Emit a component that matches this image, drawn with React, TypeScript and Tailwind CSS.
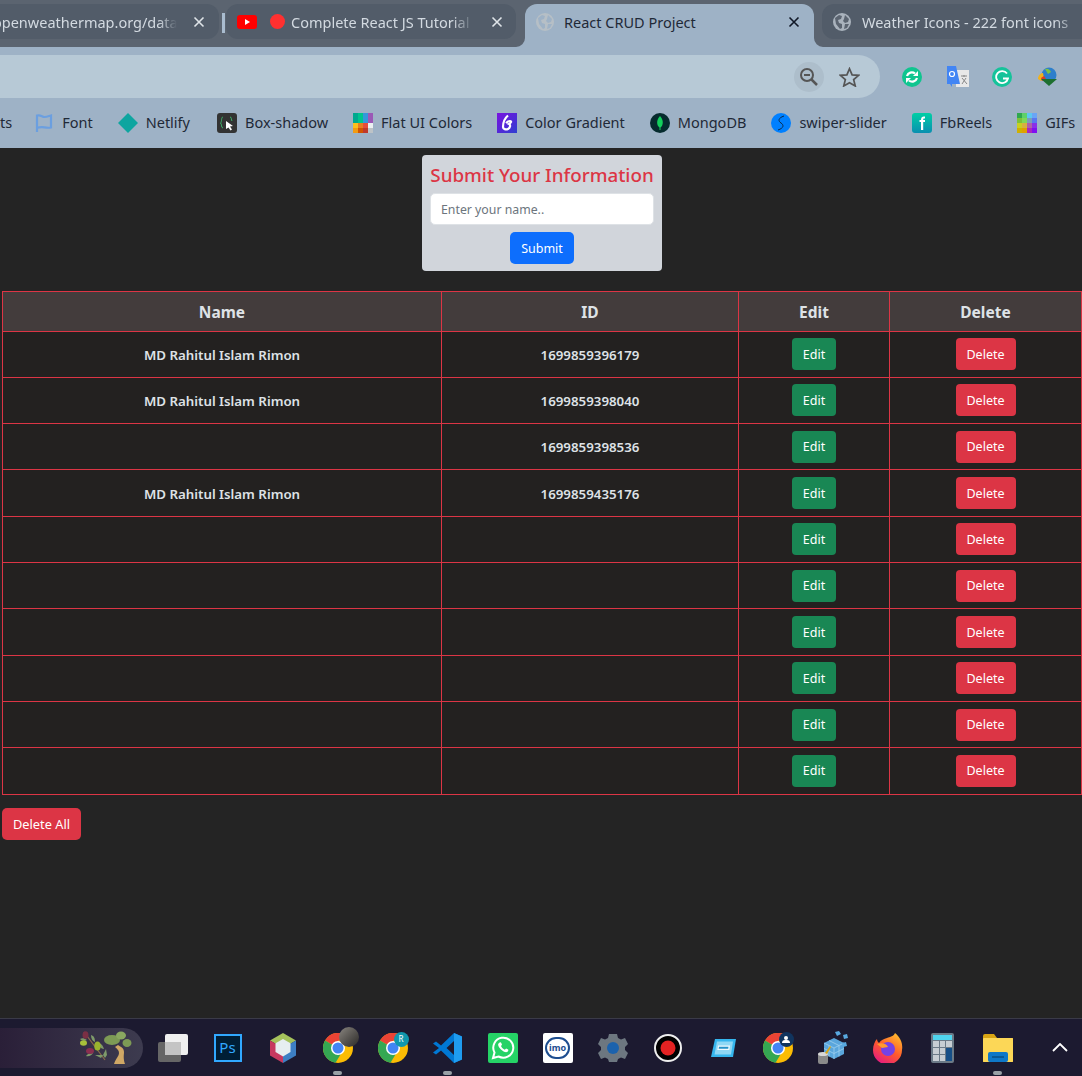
import React from "react";

const FONT = "font-['Noto_Sans','Open_Sans',sans-serif]";

const GlobeIcon = ({ color = "#a9b2bc", inner = "#5b6470" }: { color?: string; inner?: string }) => (
    <svg width="18" height="18" viewBox="0 0 18 18" className="shrink-0">
        <circle cx="9" cy="9" r="9" fill={color} />
        <path d="M2 5l4-3 3 1-1 3-3 1 1 3 3 1v4l-2 1-4-5zM12 2l4 4-1 3-3 1-2-2 1-2zM12 11h4l-2 4-3 1z" fill={inner} />
    </svg>
);

const CloseX = ({ color }: { color: string }) => (
    <svg width="12" height="12" viewBox="0 0 12 12" className="shrink-0">
        <path d="M1.5 1.5l9 9M10.5 1.5l-9 9" stroke={color} strokeWidth="1.6" />
    </svg>
);

const ChromeLogo = ({ badge }: { badge?: React.ReactNode }) => (
    <div className="relative w-[30px] h-[30px]">
        <svg width="30" height="30" viewBox="0 0 30 30">
            <circle cx="15" cy="15" r="15" fill="#fbbc04" />
            <path d="M15 15L2 7.5A15 15 0 0 1 28 7.5H15z" fill="#ea4335" />
            <path d="M15 15L2 7.5A15 15 0 0 0 12.5 29.8L19 19z" fill="#34a853" />
            <circle cx="15" cy="15" r="7" fill="#fff" />
            <circle cx="15" cy="15" r="5.5" fill="#4285f4" />
        </svg>
        {badge}
    </div>
);

// bookmark bar favicons
const Bookmark = ({ icon, label, className = "" }: { icon: React.ReactNode; label: string; className?: string }) => (
    <div className={`flex items-center gap-2 shrink-0 ${className}`}>
        <div className="w-5 h-5 flex items-center justify-center">{icon}</div>
        <span className="text-[14.5px] text-[#1f2937] whitespace-nowrap">{label}</span>
    </div>
);

const FlatColors = ({ colors }: { colors: string[] }) => (
    <svg width="20" height="20" viewBox="0 0 20 20">
        {colors.map((c, i) => (
            <rect key={i} x={(i % 4) * 5} y={Math.floor(i / 4) * 5} width="5" height="5" fill={c} />
        ))}
    </svg>
);

const bookmarks: { label: string; icon: React.ReactNode; className?: string }[] = [
    {
        label: "Font",
        icon: (
            <svg width="20" height="20" viewBox="0 0 20 20" fill="none" stroke="#6b9fe0" strokeWidth="2.2">
                <path d="M3 19V2.500c4-1 5 1.500 7.500 1.500S15 3 17 2.500v12c-2.500.6-4.500.2-6.500-.2s-4.500-.4-7.500.4" />
            </svg>
        ),
    },
    {
        label: "Netlify",
        icon: (
            <svg width="20" height="20" viewBox="0 0 20 20">
                <path d="M10 0l10 10-10 10L0 10z" fill="#0ea5a0" />
            </svg>
        ),
    },
    {
        label: "Box-shadow",
        className: "ml-[2px]",
        icon: (
            <svg width="20" height="20" viewBox="0 0 20 20">
                <rect width="20" height="20" rx="3" fill="#333" />
                <path d="M6 4C4 4 5 9 3.500 10 5 11 4 15 6 15M13 4c2 0 1 3 2 4" stroke="#3fb56b" strokeWidth="1" fill="none" />
                <path d="M9 8l7 5-3 .5 2 3-1.500 1-2-3L9 16z" fill="#fff" />
            </svg>
        ),
    },
    {
        label: "Flat UI Colors",
        icon: <FlatColors colors={["#00a88f", "#00c58e", "#3498db", "#9b59b6", "#00a88f", "#00c58e", "#3498db", "#9b59b6", "#fdbf1d", "#e67e22", "#e74c3c", "#ecf0f1", "#f39c12", "#d35400", "#c0392b", "#bdc3c7"]} />,
    },
    {
        label: "Color Gradient",
        icon: (
            <svg width="20" height="20" viewBox="0 0 20 20">
                <defs>
                    <linearGradient id="grad1" x1="0" y1="0" x2="1" y2="1">
                        <stop offset="0" stopColor="#7a11e0" />
                        <stop offset="1" stopColor="#2f3fd0" />
                    </linearGradient>
                </defs>
                <rect width="20" height="20" fill="url(#grad1)" />
                <path d="M11 2.500C8 5 6 10 6 14c0 2 3 3 5 2s3-4 1-5c2-1 3-3 1-3s-3 1-4 2" stroke="#fff" strokeWidth="2.200" fill="none" />
            </svg>
        ),
    },
    {
        label: "MongoDB",
        icon: (
            <svg width="20" height="20" viewBox="0 0 20 20">
                <circle cx="10" cy="10" r="10" fill="#062b2e" />
                <path d="M10 3c3 3 3.500 7 2 10l-1.500 1.500V17h-1v-2.500L8 13C6.500 10 7 6 10 3z" fill="#13d05c" />
            </svg>
        ),
    },
    {
        label: "swiper-slider",
        icon: (
            <svg width="20" height="20" viewBox="0 0 20 20">
                <circle cx="10" cy="10" r="10" fill="#0080ff" />
                <path d="M13 3C7 5 7 8 10 10s3 5-3 7" stroke="#0b2a4a" strokeWidth="1" fill="none" />
            </svg>
        ),
    },
    {
        label: "FbReels",
        icon: (
            <svg width="20" height="20" viewBox="0 0 20 20">
                <defs>
                    <linearGradient id="grad2" x1="0" y1="0" x2="0" y2="1">
                        <stop offset="0" stopColor="#00cfa5" />
                        <stop offset="1" stopColor="#0a8fb0" />
                    </linearGradient>
                </defs>
                <rect width="20" height="20" rx="3" fill="url(#grad2)" />
                <path d="M9 17V9H7.500V7H9c0-3 1.500-4 4-3.500v2c-1.500-.2-1.800.2-1.800 1.500H13v2h-1.800v8z" fill="#fff" />
            </svg>
        ),
    },
    {
        label: "GIFs",
        icon: <FlatColors colors={["#2fa84f", "#5fd06a", "#5cc8f0", "#6aa5f5", "#7cc23a", "#7ed957", "#7c9eb8", "#5a78f0", "#c8d020", "#d8b040", "#b060a8", "#8a30e8", "#d0b000", "#e0a000", "#a828c0", "#8010f0"]} />,
    },
];

// taskbar icons, 55px apart
const taskbarIcons: { icon: React.ReactNode; open?: boolean }[] = [
    {
        icon: (
            <svg width="30" height="28" viewBox="0 0 30 28">
                <rect x="0" y="8" width="23" height="20" rx="2" fill="#666" />
                <rect x="7" y="0" width="23" height="21" rx="2" fill="#f0f0f0" />
                <rect x="7" y="8" width="16" height="13" fill="#c4c4c4" />
            </svg>
        ),
    },
    {
        icon: (
            <div className="w-[28px] h-[28px] bg-[#001e36] border-2 border-[#31a8ff] flex items-center justify-center text-[15px] leading-none text-[#31a8ff]">Ps</div>
        ),
    },
    {
        icon: (
            <svg width="28" height="30" viewBox="0 0 28 30">
                <path d="M14 0l13 7.500-13 7.500L1 7.500z" fill="#a5c25c" />
                <path d="M1 7.500L14 15v15L1 22.500z" fill="#c7395f" />
                <path d="M27 7.500L14 15v15l13-7.500z" fill="#3d7fc4" />
                <path d="M14 6l7.500 4.300v8.600L14 23.500l-7.500-4.600v-8.600z" fill="#e6eef0" />
            </svg>
        ),
    },
    {
        open: true,
        icon: (
            <ChromeLogo
                badge={
                    <div className="absolute -top-[6px] -right-[6px] w-5 h-5 rounded-full bg-gradient-to-br from-[#8a8680] to-[#2c2a28]" />
                }
            />
        ),
    },
    {
        icon: (
            <ChromeLogo
                badge={
                    <div className="absolute -top-[1px] -right-[1px] w-[15px] h-[15px] rounded-full bg-[#0f97ad] text-[8px] text-white flex items-center justify-center">R</div>
                }
            />
        ),
    },
    {
        open: true,
        icon: (
            <svg width="30" height="30" viewBox="0 0 30 30">
                <path d="M21 0l8 3.500v23L21 30 8 17.500l-5 4L0 19.500 6 15 0 10.500l3-2 5 4zM21 8l-7.500 7 7.500 7z" fill="#0078d4" />
                <path d="M21 0l8 3.500v23L21 30z" fill="#1f9cf0" />
            </svg>
        ),
    },
    {
        icon: (
            <div className="w-[30px] h-[30px] bg-[#25d366] rounded-[2px] flex items-center justify-center">
                <svg width="24" height="24" viewBox="0 0 24 24">
                    <path d="M2 22l1.500-5.500A10 10 0 1 1 7.500 20.500z" fill="none" stroke="#fff" strokeWidth="2" />
                    <path d="M8 7c1-1 2-1 2.300 0l.7 1.700-1 1.300c.8 1.700 2 2.800 3.800 3.700l1.300-1.200 2 1c.7.500 0 2-1 2.500-3 1-9-4-9-7.500 0-.5.400-1 .900-1.500z" fill="#fff" />
                </svg>
            </div>
        ),
    },
    {
        icon: (
            <div className="w-[30px] h-[30px] bg-white rounded-[2px] flex items-center justify-center">
                <div className="w-[25px] h-[22px] rounded-full border-2 border-[#1d4d8f] flex items-center justify-center text-[9px] font-bold text-[#1d4d8f]">imo</div>
            </div>
        ),
    },
    {
        icon: (
            <svg width="30" height="30" viewBox="0 0 30 30">
                <path d="M11 1h8l1 4 3 1.500 4-1.500 3 6-3 3v3l3 3-3 6-4-1.500L20 26l-1 3h-8l-1-3-3-1.500L3 26l-3-6 3-3v-3l-3-3 3-6 4 1.500L10 5z" fill="#6d7780" />
                <circle cx="15" cy="15" r="6" fill="#1b62ad" />
            </svg>
        ),
    },
    {
        icon: (
            <svg width="28" height="28" viewBox="0 0 28 28">
                <circle cx="14" cy="14" r="13" fill="#000" stroke="#eee" strokeWidth="2" />
                <circle cx="14" cy="14" r="7.500" fill="#e32222" />
            </svg>
        ),
    },
    {
        icon: (
            <svg width="26" height="20" viewBox="0 0 26 20">
                <path d="M5 1h21l-3 18H1z" fill="#35b6ee" />
                <path d="M7 3.500h16l-2 13H4.500z" fill="#8fd8f5" />
                <path d="M8 7.500h12l-.7 4.500H7.300z" fill="#f0fafe" />
                <path d="M9 8.800h9.500l-.3 2H8.700z" fill="#2592c9" />
            </svg>
        ),
    },
    {
        icon: (
            <ChromeLogo
                badge={
                    <div className="absolute -top-[1px] -right-[1px] w-[15px] h-[15px] rounded-full bg-[#10345e] flex flex-col items-center justify-center">
                        <div className="w-[4px] h-[4px] rounded-full bg-white" />
                        <div className="w-[8px] h-[3px] rounded-t-full bg-white" />
                    </div>
                }
            />
        ),
    },
    {
        icon: (
            <svg width="30" height="34" viewBox="0 0 30 34">
                <path d="M6 12l10-5 10 5v11l-10 5-10-5z" fill="#5aa6dc" />
                <path d="M6 12l10 5 10-5M16 17v11M11 9.500l10 5M11 14.500v11M21 14.500v11M6 17.500l10 5 10-5" stroke="#9fd0ef" strokeWidth="0.800" fill="none" />
                <path d="M17 1l4-1 2 3-4 2zM25 4l4-1 1 4-4 1zM24 12l4-1 1 4-4 1z" fill="#58a9e0" />
                <rect x="0" y="22" width="10" height="11" rx="2" fill="#8a8a8a" />
                <ellipse cx="5" cy="23" rx="5" ry="2" fill="#d8d8d8" />
                <path d="M7 22l5-7 1 1-4 7z" fill="#d9a514" />
            </svg>
        ),
    },
    {
        icon: (
            <svg width="30" height="30" viewBox="0 0 30 30">
                <defs>
                    <linearGradient id="fox" x1="0.8" y1="0" x2="0.2" y2="1">
                        <stop offset="0" stopColor="#ffbd2e" />
                        <stop offset="0.5" stopColor="#ff5a2c" />
                        <stop offset="1" stopColor="#e31587" />
                    </linearGradient>
                </defs>
                <path d="M22 0c6 5 8 11 7 17a14.500 14.500 0 0 1-29 0C0 12 2 8 4 6c0 2 1 3 2 4 2-3 5-4 8-5 3-1 7-2 8-5z" fill="url(#fox)" />
                <circle cx="15" cy="16" r="7" fill="#7542e5" />
                <path d="M4 11c5-2 10 0 11 3l-6 1z" fill="#ff9a2e" />
            </svg>
        ),
    },
    {
        icon: (
            <div className="w-[23px] h-[30px] rounded-[2px] bg-[#6b7a87] p-[2px] flex flex-col gap-[1px]">
                <div className="h-[5px] bg-[#4fd4ee]" />
                <div className="grid grid-cols-3 gap-[1px] flex-1">
                    <div className="bg-[#c7ced3]" />
                    <div className="bg-[#c7ced3]" />
                    <div className="bg-[#c7ced3]" />
                    <div className="bg-[#c7ced3]" />
                    <div className="bg-[#c7ced3]" />
                    <div className="bg-[#164f87] row-span-2" />
                    <div className="bg-[#c7ced3]" />
                    <div className="bg-[#c7ced3]" />
                </div>
            </div>
        ),
    },
    {
        open: true,
        icon: (
            <svg width="30" height="28" viewBox="0 0 30 28">
                <path d="M0 2a2 2 0 0 1 2-2h9l3 4h16v24H0z" fill="#d9a514" />
                <rect y="4" width="30" height="24" rx="1" fill="#fcd757" />
                <rect x="5" y="18" width="20" height="10" rx="2" fill="#0f78c8" />
                <path d="M9 23h12" stroke="#0b4f85" strokeWidth="1.500" />
            </svg>
        ),
    },
];

const people = [
    { name: "MD Rahitul Islam Rimon", id: "1699859396179" },
    { name: "MD Rahitul Islam Rimon", id: "1699859398040" },
    { name: "", id: "1699859398536" },
    { name: "MD Rahitul Islam Rimon", id: "1699859435176" },
    { name: "", id: "" },
    { name: "", id: "" },
    { name: "", id: "" },
    { name: "", id: "" },
    { name: "", id: "" },
    { name: "", id: "" },
];

export default function App() {
    return (
        <div className={`w-[1082px] h-[1076px] overflow-hidden flex flex-col bg-[#242424] ${FONT}`}>
            {/* tab strip */}
            <div className="h-[47px] shrink-0 bg-[#5b6470] pt-1 flex items-start">
                <div className="w-[219px] h-[35px] shrink-0 rounded-r-[12px] bg-[#525c69] flex items-center pr-[14px] overflow-hidden">
                    <div className="flex-1 min-w-0 overflow-hidden whitespace-nowrap pt-[2px] text-[14.5px] text-[#d3dae1] -ml-[7px] [mask-image:linear-gradient(to_right,black_90%,transparent)]">openweathermap.org/data/2.5</div>
                    <div className="ml-[16px]"><CloseX color="#dfe4e8" /></div>
                </div>
                <div className="w-[3px] h-[20px] mt-[9px] ml-[3px] bg-[#a9bccf] shrink-0" />
                <div className="w-[290px] h-[35px] ml-[1px] shrink-0 rounded-[12px] bg-[#525c69] flex items-center pl-[11px] pr-[13px]">
                    <svg width="20" height="14" viewBox="0 0 20 14" className="shrink-0">
                        <rect width="20" height="14" rx="3" fill="#f00" />
                        <path d="M8 4l5 3-5 3z" fill="#fff" />
                    </svg>
                    <div className="w-[15px] h-[15px] rounded-full bg-[#ff3030] ml-[13px] shrink-0" />
                    <div className="flex-1 min-w-0 overflow-hidden whitespace-nowrap pt-[2px] text-[14.5px] text-[#d3dae1] ml-[6px] [mask-image:linear-gradient(to_right,black_88%,transparent)]">Complete React JS Tutorial</div>
                    <div className="ml-[17px]"><CloseX color="#dfe4e8" /></div>
                </div>
                <div className="relative w-[289px] h-[43px] ml-[9px] shrink-0 rounded-t-[12px] bg-[#9eb2c6] flex items-center pb-2 pl-[11px] pr-[14px]">
                    <svg width="9" height="9" viewBox="0 0 9 9" className="absolute -left-[9px] bottom-0">
                        <path d="M9 0v9H0a9 9 0 0 0 9-9z" fill="#9eb2c6" />
                    </svg>
                    <GlobeIcon color="#b6bfc6" inner="#9eb2c6" />
                    <div className="flex-1 whitespace-nowrap pt-[2px] text-[14.5px] text-[#1f2937] ml-[10px]">React CRUD Project</div>
                    <CloseX color="#111827" />
                    <svg width="9" height="9" viewBox="0 0 9 9" className="absolute -right-[9px] bottom-0">
                        <path d="M0 0v9h9a9 9 0 0 1-9-9z" fill="#9eb2c6" />
                    </svg>
                </div>
                <div className="w-[260px] h-[35px] ml-2 shrink-0 rounded-l-[12px] bg-[#525c69] flex items-center pl-[11px]">
                    <GlobeIcon />
                    <div className="flex-1 min-w-0 overflow-hidden whitespace-nowrap pt-[2px] text-[14.5px] text-[#d3dae1] ml-[11px] [mask-image:linear-gradient(to_right,black_88%,transparent)]">Weather Icons - 222 font icons</div>
                </div>
            </div>

            {/* address bar */}
            <div className="h-[51px] shrink-0 bg-[#9eb2c6] pt-2 flex items-start">
                <div className="w-[880px] h-[43px] shrink-0 bg-[#b7c9d6] rounded-r-full flex items-center justify-end pr-[20px] gap-[15px]">
                    <div className="w-[30px] h-[30px] rounded-full bg-[#adbecb] flex items-center justify-center">
                        <svg width="20" height="20" viewBox="0 0 20 20" fill="none" stroke="#555" strokeWidth="2">
                            <circle cx="8" cy="8" r="6" />
                            <path d="M5 8h6" />
                            <path d="M12.500 12.500L18 18" strokeWidth="2.500" />
                        </svg>
                    </div>
                    <svg width="21" height="20" viewBox="0 0 24 23" fill="none" stroke="#555" strokeWidth="2">
                        <path d="M12 2l3 7 7.500.6-5.700 4.900 1.800 7.300L12 18l-6.600 3.800 1.800-7.300L1.500 9.600 9 9z" />
                    </svg>
                </div>
                <div className="flex-1 flex items-center h-[43px] pl-[22px] gap-[25px]">
                    <div className="w-5 h-5 rounded-full bg-[#0fc58f] flex items-center justify-center">
                        <svg width="14" height="14" viewBox="0 0 14 14" fill="none" stroke="#fff" strokeWidth="2.200">
                            <path d="M2 6a5 5 0 0 1 8-2.500M12 8a5 5 0 0 1-8 2.500" />
                            <path d="M8 6h5V1z" fill="#fff" stroke="none" />
                            <path d="M6 8H1v5z" fill="#fff" stroke="none" />
                        </svg>
                    </div>
                    <svg width="22" height="22" viewBox="0 0 22 22" className="-mr-[2px]">
                        <rect x="9" y="4" width="13" height="17" fill="#e8e8e8" />
                        <path d="M0 0h9l4 18H5v3l-2-3H0z" fill="#4285f4" />
                        <path d="M14 10h6M17 9v2M15 18l4-6M15 12l5 6" stroke="#888" strokeWidth="1" />
                        <circle cx="5" cy="8" r="2.500" fill="none" stroke="#fff" strokeWidth="1.200" />
                    </svg>
                    <div className="w-5 h-5 rounded-full bg-[#15c39a] flex items-center justify-center">
                        <svg width="14" height="14" viewBox="0 0 14 14" fill="none" stroke="#fff" strokeWidth="1.800">
                            <path d="M12 3.500A6 6 0 1 0 13 8.500H8" />
                        </svg>
                    </div>
                    <svg width="21" height="20" viewBox="0 0 21 20">
                        <circle cx="12" cy="8" r="7.500" fill="#2d7fcb" />
                        <path d="M8 2c3-1 5 1 6 3l-3 2z" fill="#7dc242" />
                        <path d="M1 12c0-4 3-6 5-6l1 5-3 3z" fill="#f2b21b" />
                        <path d="M4 11l3-2 2 3-4 2z" fill="#d93a2b" />
                        <path d="M4 12h16l-8 7z" fill="#1d6f2f" />
                    </svg>
                </div>
            </div>

            {/* bookmarks */}
            <div className="h-[50px] shrink-0 bg-[#9eb2c6] flex items-center gap-[25px] overflow-hidden">
                <span className="text-[14.5px] text-[#1f2937] -mr-[3px] shrink-0">ts</span>
                {bookmarks.map((b) => (
                    <Bookmark key={b.label} icon={b.icon} label={b.label} className={b.className} />
                ))}
            </div>

            {/* page */}
            <main className="flex-1 min-h-0 pt-[7px]">
                <div className="w-[240px] h-[116px] ml-[422px] bg-[#d1d5db] rounded-[4px] px-2 pt-[5px] flex flex-col items-center">
                    <h4 className="text-[18.8px] font-medium leading-[30px] text-[#dc3545] whitespace-nowrap">Submit Your Information</h4>
                    <input
                        type="text"
                        placeholder="Enter your name.."
                        className="mt-[3px] w-full h-8 rounded-[5px] bg-white border border-[#dee2e6] px-[10px] text-[12.3px] placeholder:text-[#6c757d] outline-none"
                    />
                    <button type="button" className="mt-[7px] w-16 h-8 pt-[2px] rounded-[5px] bg-[#0d6efd] text-white text-[12.5px]">Submit</button>
                </div>

                <table className="ml-[2px] mt-[19.55px] w-[1080px] table-fixed border-collapse border border-[#dc3545] text-[#dee2e6] text-center">
                    <thead>
                        <tr className="h-10 bg-[#433c3c] text-[15.5px]">
                            <th className="w-[439px] pt-[4px] border border-[#dc3545] font-bold">Name</th>
                            <th className="w-[297px] pt-[4px] border border-[#dc3545] font-bold">ID</th>
                            <th className="w-[151px] pt-[4px] border border-[#dc3545] font-bold">Edit</th>
                            <th className="pt-[4px] border border-[#dc3545] font-bold">Delete</th>
                        </tr>
                    </thead>
                    <tbody>
                        {people.map((p, i) => (
                            <tr key={i} className="h-[46.3px] bg-[#232120] text-[13.3px] font-semibold">
                                <td className="pt-[3px] border border-[#dc3545]">{p.name}</td>
                                <td className="pt-[3px] border border-[#dc3545]">{p.id}</td>
                                <td className="border border-[#dc3545]">
                                    <button type="button" className="w-11 h-8 pt-[2px] align-middle rounded-[4px] bg-[#198754] text-white text-[12.5px] font-normal">Edit</button>
                                </td>
                                <td className="border border-[#dc3545]">
                                    <button type="button" className="w-[60px] h-8 pt-[2px] align-middle rounded-[4px] bg-[#dc3545] text-white text-[12.5px] font-normal">Delete</button>
                                </td>
                            </tr>
                        ))}
                    </tbody>
                </table>

                <button type="button" className="block ml-[2px] mt-[13px] w-[79px] h-8 pt-[2px] rounded-[5px] bg-[#dc3545] text-white text-[12.8px]">Delete All</button>
            </main>

            {/* windows taskbar */}
            <div className="h-[58px] shrink-0 bg-[#1c1a30] border-t border-[#3a3a48] flex items-center">
                <div className="w-[143px] h-10 shrink-0 rounded-r-full bg-gradient-to-r from-[#2a1f38] to-[#3d3b4f] flex items-center justify-end pr-[11px]">
                    <svg width="53" height="33" viewBox="0 0 53 33">
                        <path d="M5 1l21 28" stroke="#8a6a4a" strokeWidth="1.200" />
                        <path d="M12 4c3 1 4 3 4 7-3-1-4-4-4-7zM20 12c3 1 4 3 5 6-3 0-5-3-5-6zM16 24l8 0-2 3zM8 9c-3-2-5-2-7-1 2 2 5 2 7 1zM14 22c-3 0-6 1-7 3 3 1 6-1 7-3zM24 24l3-6 1 6-2 3z" fill="#7e9a6a" />
                        <ellipse cx="6.500" cy="4" rx="3" ry="3.800" fill="#7a2f44" />
                        <ellipse cx="4.500" cy="12" rx="3.500" ry="2.800" fill="#a8c03a" />
                        <ellipse cx="18.500" cy="15" rx="3.200" ry="4.500" fill="#9ab52e" />
                        <ellipse cx="11" cy="20" rx="4" ry="3" fill="#8a2f50" />
                        <path d="M35 33c2-6 5-8 5-11s-2-4-4-6l3-2c3 2 6 3 6 7 0 3-1 6 1 12z" fill="#d0a765" />
                        <ellipse cx="33" cy="9" rx="8" ry="5" fill="#7d9a55" />
                        <ellipse cx="42" cy="4.500" rx="5" ry="4" fill="#8aa860" />
                        <ellipse cx="48" cy="12" rx="4.500" ry="4" fill="#7d9a55" />
                    </svg>
                </div>
                <div className="flex ml-[2px]">
                    {taskbarIcons.map((t, i) => (
                        <div key={i} className="relative w-[55px] h-[58px] flex items-center justify-center">
                            {t.icon}
                            {t.open && <div className="absolute bottom-[2px] left-[23px] w-[9px] h-[4px] rounded-full bg-[#9aa0a6]" />}
                        </div>
                    ))}
                </div>
                <svg width="16" height="9" viewBox="0 0 16 9" fill="none" stroke="#fff" strokeWidth="1.800" className="ml-[27px]">
                    <path d="M1 8l7-7 7 7" />
                </svg>
            </div>
        </div>
    );
}
